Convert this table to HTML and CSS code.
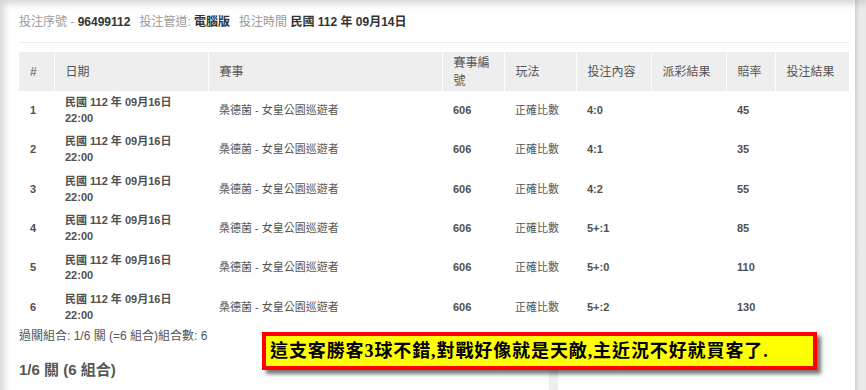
FILE: index.html
```html
<!DOCTYPE html>
<html lang="zh-Hant">
<head>
<meta charset="utf-8">
<title>投注明細</title>
<link rel="stylesheet" href="styles.css">
</head>
<body>
<div class="screen">
  <main class="page">
    <div class="meta">
      <span class="grp"><span class="lbl">投注序號 - </span><b>96499112</b></span>
      <span class="grp"><span class="lbl">投注管道: </span><b>電腦版</b></span>
      <span class="grp"><span class="lbl">投注時間 </span><b>民國 112 年 09月14日</b></span>
    </div>
    <hr class="rule">
    <table class="bets">
      <colgroup>
        <col class="w-no"><col class="w-date"><col class="w-match"><col class="w-code"><col class="w-play">
        <col class="w-pick"><col class="w-pay"><col class="w-odds"><col class="w-res">
      </colgroup>
      <thead>
        <tr><th>#</th><th>日期</th><th>賽事</th><th>賽事編號</th><th>玩法</th><th>投注內容</th><th>派彩結果</th><th>賠率</th><th>投注結果</th></tr>
      </thead>
      <tbody>
        <tr><td class="b">1</td><td class="b">民國 112 年 09月16日<br>22:00</td><td>桑德菌 - 女皇公園巡遊者</td><td class="b">606</td><td>正確比數</td><td class="b">4:0</td><td></td><td class="b">45</td><td></td></tr>
        <tr><td class="b">2</td><td class="b">民國 112 年 09月16日<br>22:00</td><td>桑德菌 - 女皇公園巡遊者</td><td class="b">606</td><td>正確比數</td><td class="b">4:1</td><td></td><td class="b">35</td><td></td></tr>
        <tr><td class="b">3</td><td class="b">民國 112 年 09月16日<br>22:00</td><td>桑德菌 - 女皇公園巡遊者</td><td class="b">606</td><td>正確比數</td><td class="b">4:2</td><td></td><td class="b">55</td><td></td></tr>
        <tr><td class="b">4</td><td class="b">民國 112 年 09月16日<br>22:00</td><td>桑德菌 - 女皇公園巡遊者</td><td class="b">606</td><td>正確比數</td><td class="b">5+:1</td><td></td><td class="b">85</td><td></td></tr>
        <tr><td class="b">5</td><td class="b">民國 112 年 09月16日<br>22:00</td><td>桑德菌 - 女皇公園巡遊者</td><td class="b">606</td><td>正確比數</td><td class="b">5+:0</td><td></td><td class="b">110</td><td></td></tr>
        <tr><td class="b">6</td><td class="b">民國 112 年 09月16日<br>22:00</td><td>桑德菌 - 女皇公園巡遊者</td><td class="b">606</td><td>正確比數</td><td class="b">5+:2</td><td></td><td class="b">130</td><td></td></tr>
      </tbody>
    </table>
    <p class="combo">過關組合: 1/6 關 (=6 組合)組合數: 6</p>
    <div class="lower">
      <h3 class="combo-title">1/6 關 (6 組合)</h3>
      <div class="side-panel"></div>
    </div>
  </main>
  <div class="rail"></div>
  <div class="callout">這支客勝客3球不錯,對戰好像就是天敵,主近況不好就買客了.</div>
</div>
</body>
</html>
```
FILE: styles.css
```css
* { box-sizing: border-box; }
html, body { margin: 0; padding: 0; }
body {
  width: 866px;
  height: 390px;
  overflow: hidden;
  background: #fff;
  font-family: "Liberation Sans", "Noto Sans CJK TC", sans-serif;
  color: #555;
}
.screen {
  position: relative;
  display: flex;
  width: 866px;
  height: 390px;
  overflow: hidden;
}
.page {
  width: 855px;
  height: 390px;
  padding: 13px 6px 0 18px;
  box-shadow: inset 7px 7px 7px -3px rgba(0, 0, 0, 0.16);
  background: #fff;
}
.rail {
  flex: 1;
  height: 390px;
  background: linear-gradient(to right, #d6d6d6, #e9e9e9 45%, #efefef);
  box-shadow: inset 0 7px 7px -3px rgba(0, 0, 0, 0.12);
}
.meta {
  display: flex;
  font-size: 12px;
  line-height: 18px;
  padding-left: 1px;
  white-space: pre;
}
.grp { margin-right: 9px; }
.lbl { color: #9a9a9a; }
.meta b { color: #333; font-weight: bold; }
.rule {
  margin: 11px 0 0 0;
  border: 0;
  border-top: 1px solid #eeeeee;
  height: 0;
}
.bets {
  margin: 9px 0 0 1px;
  width: 830px;
  table-layout: fixed;
  border-collapse: collapse;
}
.w-no { width: 35px; }
.w-date { width: 154px; }
.w-match { width: 234px; }
.w-code { width: 62px; }
.w-play { width: 72px; }
.w-pick { width: 75px; }
.w-pay { width: 75px; }
.w-odds { width: 49px; }
.w-res { width: 74px; }
.bets th {
  height: 39px;
  padding: 0 11px;
  background: #eeeeee;
  border-left: 1px solid #fff;
  font-size: 12px;
  line-height: 18px;
  font-weight: normal;
  text-align: left;
  color: #555;
  vertical-align: middle;
}
.bets th:first-child { border-left: 0; }
.bets td {
  padding: 4px 11px;
  font-size: 11px;
  line-height: 15.7px;
  color: #555;
  vertical-align: middle;
  border: 0;
}
.bets td.b { font-weight: bold; color: #4f4f4f; }
.combo {
  margin: 0;
  padding-left: 1px;
  font-size: 12px;
  line-height: 18px;
  color: #555;
}
.lower {
  display: flex;
  margin-top: 14px;
}
.combo-title {
  width: 531px;
  margin: 0;
  padding-left: 1px;
  font-size: 15px;
  line-height: 22px;
  font-weight: bold;
  color: #555;
}
.side-panel {
  width: 9px;
  height: 40px;
  margin-top: -6px;
  background: #eeeeee;
}
.callout {
  position: absolute;
  left: 262px;
  top: 332px;
  width: 555px;
  height: 38px;
  border: 4px solid #ff0000;
  background: #ffff00;
  box-shadow: 4px 4px 4px rgba(0, 0, 0, 0.55);
  padding: 0 0 0 4px;
  font-family: "Liberation Serif", "Noto Sans CJK TC", serif;
  font-size: 18px;
  font-weight: bold;
  letter-spacing: 0.9px;
  line-height: 30px;
  color: #000;
  white-space: nowrap;
}
```
